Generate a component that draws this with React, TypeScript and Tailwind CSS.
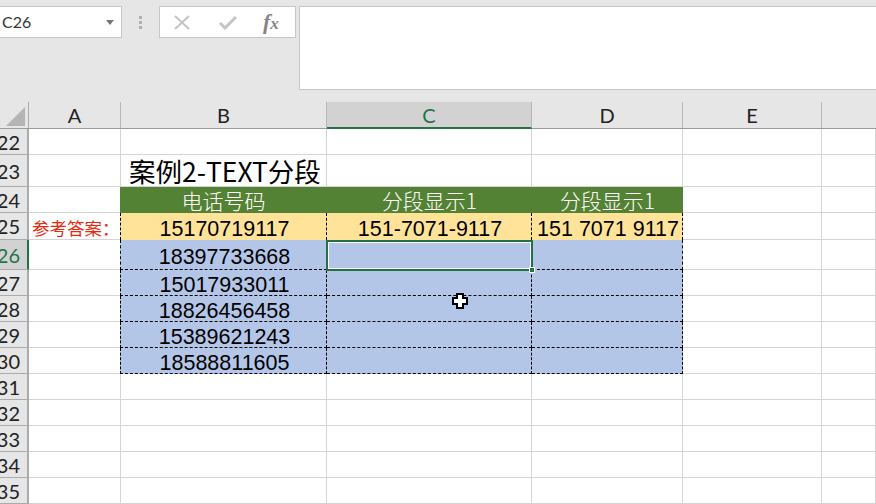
import React from 'react';

const sans = "font-['Liberation_Sans',sans-serif]";
const cjk = "font-['Noto_Sans_CJK_SC',sans-serif]";

const columns = [
  { name: 'A', width: 'w-[92px]' },
  { name: 'B', width: 'w-[206px]' },
  { name: 'C', width: 'w-[205px]' },
  { name: 'D', width: 'w-[151px]' },
  { name: 'E', width: 'w-[139px]' },
  { name: '', width: 'flex-1' },
];

const phones = [
  '18397733668',
  '15017933011',
  '18826456458',
  '15389621243',
  '18588811605',
];

// column widths shared by every row of the sheet
const gridCols = 'grid grid-cols-[92px_206px_205px_151px_139px_1fr]';
const plain = 'border-r border-b border-[#d4d4d4] bg-white';
const ants = 'border-r border-b border-dashed border-black';
const antsTop = 'border-r border-dashed border-black';
const greenHead = `bg-[#548235] flex items-center justify-center ${cjk} font-light leading-none text-[21px] text-white`;
const number = `flex items-center justify-center pt-[4px] pl-[2px] ${sans} leading-[18px] text-[21.5px] text-black whitespace-nowrap`;

const RowHead = ({ n, active }: { n: number; active?: boolean }) => (
  <div
    className={`w-[29px] shrink-0 border-r-2 border-b border-[#ababab] pr-[7px] flex items-center justify-end overflow-hidden font-['Lato',sans-serif] leading-none text-[20px] ${
      active ? 'bg-[#d2d2d2] text-[#217346] border-r-[#217346]' : 'bg-[#e6e6e6] text-[#222]'
    }`}
  >
    {n}
  </div>
);

const EmptyRow = ({ n, height }: { n: number; height: string }) => (
  <div className={`flex ${height}`}>
    <RowHead n={n} />
    <div className={`flex-1 ${gridCols}`}>
      {columns.map((c) => (
        <div key={c.name} className={plain} />
      ))}
    </div>
  </div>
);

const Toolbar = () => (
  <div className="h-[102px] bg-[#e6e6e6] flex items-start pt-[6px]">
    <div className="w-[122px] h-[32px] bg-white border border-l-0 border-[#c6c6c6] flex items-center justify-between pl-[2px] pr-[7px]">
      <span className="font-['Lato',sans-serif] text-[16px] text-[#333]">C26</span>
      <svg width="8" height="5" viewBox="0 0 8 5">
        <path d="M0 0H8L4 5Z" fill="#777" />
      </svg>
    </div>
    <div className="w-[37px] h-[32px] flex flex-col items-center justify-center gap-[2px]">
      <span className="w-[3px] h-[3px] bg-[#b0b0b0]" />
      <span className="w-[3px] h-[3px] bg-[#b0b0b0]" />
      <span className="w-[3px] h-[3px] bg-[#b0b0b0]" />
    </div>
    <div className="w-[137px] h-[32px] bg-white border border-[#c6c6c6] flex items-center">
      <svg className="ml-[14px]" width="16" height="15" viewBox="0 0 16 15">
        <path d="M1 1L15 14M15 1L1 14" stroke="#c4c4c4" strokeWidth="2" fill="none" />
      </svg>
      <svg className="ml-[29px]" width="18" height="15" viewBox="0 0 18 15">
        <path d="M1 8L6 13L17 2" stroke="#c4c4c4" strokeWidth="3" fill="none" />
      </svg>
      <span className="ml-[26px] font-['Liberation_Serif',serif] italic font-bold leading-none text-[#858585] flex items-baseline">
        <span className="text-[22px]">f</span>
        <span className="text-[17px]">x</span>
      </span>
    </div>
    <div className="ml-[3px] flex-1 h-[84px] bg-white border border-r-0 border-[#c6c6c6]" />
  </div>
);

const ColumnHeader = () => (
  <div className="flex h-[27px] bg-[#e6e6e6] border-b border-[#9b9b9b] font-['Lato',sans-serif] leading-none text-[20px] text-[#222]">
    <div className="w-[29px] shrink-0 border-r border-[#ababab] flex items-end justify-end pr-[3px] pb-[2px]">
      <svg width="19" height="19" viewBox="0 0 19 19">
        <path d="M19 0V19H0Z" fill="#b4b4b4" />
      </svg>
    </div>
    {columns.map((c) => (
      <div
        key={c.name}
        className={`${c.width} flex items-center justify-center ${c.name ? 'border-r border-[#b8b8b8]' : ''} ${
          c.name === 'C' ? 'bg-[#d2d2d2] text-[#217346] border-b-2 border-b-[#217346] h-[27px]' : ''
        }`}
      >
        {c.name}
      </div>
    ))}
  </div>
);

export default function App() {
  return (
    <div className="w-[876px] h-[504px] overflow-hidden bg-white flex flex-col">
      <Toolbar />
      <ColumnHeader />

      <div className="relative flex flex-col">
        <EmptyRow n={22} height="h-[26px]" />

        <div className="flex h-[32px]">
          <RowHead n={23} />
          <div className={`flex-1 ${gridCols}`}>
            <div className={plain} />
            <div className={`${plain} pl-[8px] pt-[2px] flex items-center ${cjk} leading-none text-[26.5px] text-black whitespace-nowrap`}>
              案例2-TEXT分段
            </div>
            <div className={plain} />
            <div className={plain} />
            <div className={plain} />
            <div className={plain} />
          </div>
        </div>

        <div className="flex h-[26px]">
          <RowHead n={24} />
          <div className={`flex-1 ${gridCols}`}>
            <div className={plain} />
            <div className={`${greenHead} -ml-px`}>电话号码</div>
            <div className={greenHead}>分段显示1</div>
            <div className={greenHead}>分段显示1</div>
            <div className={plain} />
            <div className={plain} />
          </div>
        </div>

        <div className="flex h-[27px]">
          <RowHead n={25} />
          <div className={`flex-1 ${gridCols}`}>
            <div className={`${plain} pl-[3px] pt-[4px] flex items-center overflow-hidden ${cjk} leading-none text-[17.5px] text-[#e8280a] whitespace-nowrap`}>
              参考答案：
            </div>
            <div className={`${antsTop} border-l -ml-px bg-[#ffe399] ${number}`}>15170719117</div>
            <div className={`${antsTop} bg-[#ffe399] ${number}`}>151-7071-9117</div>
            <div className={`${antsTop} bg-[#ffe399] ${number}`}>151 7071 9117</div>
            <div className={plain} />
            <div className={plain} />
          </div>
        </div>

        {phones.map((p, i) => (
          <div key={p} className={`flex ${i === 0 ? 'h-[30px]' : 'h-[26px]'}`}>
            <RowHead n={26 + i} active={i === 0} />
            <div className={`flex-1 ${gridCols}`}>
              <div className={plain} />
              <div className={`${ants} border-l -ml-px bg-[#b4c6e7] ${number}`}>{p}</div>
              <div className={`${ants} bg-[#b4c6e7]`} />
              <div className={`${ants} bg-[#b4c6e7]`} />
              <div className={plain} />
              <div className={plain} />
            </div>
          </div>
        ))}

        <EmptyRow n={31} height="h-[26px]" />
        <EmptyRow n={32} height="h-[26px]" />
        <EmptyRow n={33} height="h-[26px]" />
        <EmptyRow n={34} height="h-[26px]" />
        <EmptyRow n={35} height="h-[26px]" />

        {/* active cell C26 */}
        <div className="absolute left-[326px] top-[111px] w-[207px] h-[31px] border-2 border-[#217346] shadow-[inset_0_0_0_1px_#fff]" />
        <div className="absolute left-[529px] top-[138px] w-[6px] h-[6px] bg-[#217346] border border-white" />

        {/* mouse cursor */}
        <svg className="absolute left-[452px] top-[164px]" width="16" height="16" viewBox="0 0 16 16">
          <path d="M5 1H11V5H15V11H11V15H5V11H1V5H5Z" fill="#fff" stroke="#000" strokeWidth="2" />
        </svg>
      </div>
    </div>
  );
}
